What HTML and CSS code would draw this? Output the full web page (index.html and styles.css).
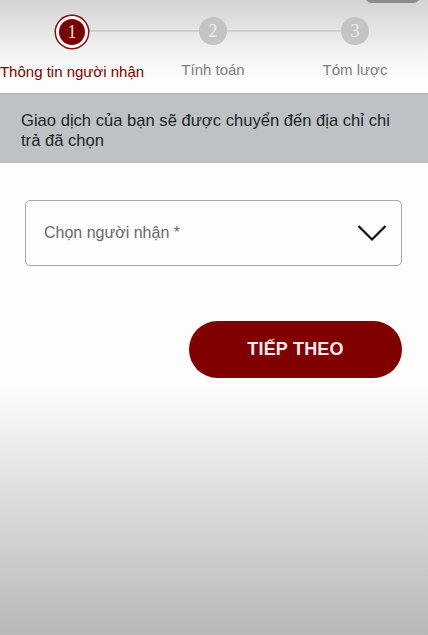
FILE: index.html
```html
<!DOCTYPE html>
<html lang="vi">
<head>
<meta charset="utf-8">
<title>Chọn người nhận</title>
<link rel="stylesheet" href="styles.css">
</head>
<body>
<div class="notch"></div>
<header class="stepper">
  <div class="step active">
    <div class="dot"><span>1</span></div>
    <div class="label">Thông tin người nhận</div>
  </div>
  <div class="step">
    <div class="dot"><span>2</span></div>
    <div class="label">Tính toán</div>
  </div>
  <div class="step">
    <div class="dot"><span>3</span></div>
    <div class="label">Tóm lược</div>
  </div>
</header>
<div class="notice">Giao dịch của bạn sẽ được chuyển đến địa chỉ chi trả đã chọn</div>
<main class="content">
  <div class="select">
    <span class="placeholder">Chọn người nhận *</span>
    <svg class="chev" width="30" height="18" viewBox="0 0 30 18"><path d="M1.5 2 L15 15.5 L28.5 2" fill="none" stroke="#111" stroke-width="2.2"/></svg>
  </div>
  <div class="actions">
    <button class="next">TIẾP THEO</button>
  </div>
</main>
</body>
</html>
```
FILE: styles.css
```css
html {
  min-height: 635px;
  background: #fff;
}
body {
  margin: 0;
  min-height: 635px;
  position: relative;
  font-family: "Liberation Sans", Arial, sans-serif;
  background: linear-gradient(to bottom, #d3d3d3 0px, #f4f4f4 55px, #fdfdfd 80px, #fdfdfd 385px, #ededed 440px, #d6d6d6 520px, #b8b8b8 635px);
  overflow: hidden;
}
.notch {
  position: absolute;
  top: -10px;
  left: 365px;
  width: 55px;
  height: 13px;
  border-radius: 7px;
  background: #8c8c8c;
}
.stepper {
  position: relative;
  display: grid;
  grid-template-columns: 144px 138px 146px;
  height: 93px;
}
.stepper::before {
  content: "";
  position: absolute;
  left: 72px;
  right: 74px;
  top: 30px;
  height: 2px;
  background: #cfcfcf;
}
.step {
  display: flex;
  flex-direction: column;
  align-items: center;
  padding-top: 14px;
  position: relative;
}
.dot {
  width: 28px;
  height: 28px;
  margin-top: 3px;
  margin-bottom: 3px;
  border-radius: 50%;
  background: #c4c4c4;
  display: flex;
  align-items: center;
  justify-content: center;
  font-family: "Liberation Serif", "Times New Roman", serif;
  font-size: 18px;
  color: #ececec;
}
.step.active .dot {
  width: 26px;
  height: 26px;
  margin-top: 2px;
  margin-bottom: 2px;
  background: #7a0000;
  border: 3px solid #fff;
  box-shadow: 0 0 0 1.5px #8a0a0a;
  color: #f3e6e6;
}
.label {
  margin-top: 13px;
  font-size: 15px;
  line-height: 18px;
  color: #7d7d7d;
  white-space: nowrap;
}
.step.active .label {
  color: #800000;
}
.notice {
  background: #bdc3c5;
  border-top: 1px solid #a9afb1;
  padding: 17px 32px 12px 21px;
  font-size: 16.6px;
  line-height: 20px;
  color: #1f1f1f;
  height: 40px;
}
.content {
  padding: 37px 26px 0 25px;
}
.select {
  height: 64px;
  border: 1px solid #a8a8a8;
  border-radius: 5px;
  display: flex;
  align-items: center;
  justify-content: space-between;
  padding: 0 14px 0 18px;
  background: #fdfdfd;
}
.placeholder {
  font-size: 16px;
  color: #696969;
}
.chev {
  display: block;
}
.actions {
  display: flex;
  justify-content: flex-end;
  margin-top: 55px;
}
.next {
  width: 213px;
  height: 57px;
  border: none;
  border-radius: 29px;
  background: #800000;
  color: #f6ecec;
  font-family: "Liberation Sans", Arial, sans-serif;
  font-weight: bold;
  font-size: 18px;
  letter-spacing: 0.2px;
}
```
